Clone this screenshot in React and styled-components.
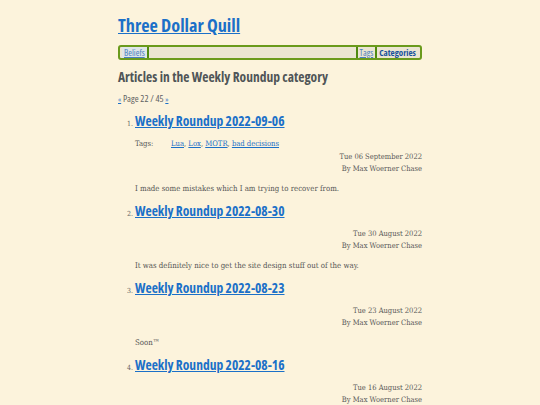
import React from 'react';
import styled, { createGlobalStyle } from 'styled-components';

const Global = createGlobalStyle`
    html, body {
        margin: 0;
        padding: 0;
        background: #fcf3dc;
    }
    body {
        font-family: "DejaVu Serif", "Liberation Serif", serif;
        font-stretch: condensed;
        color: #555;
    }
    a {
        color: #1b70c8;
    }
`;

const Page = () => (
    <>
        <Global />
        <Main>
            <Title><a href="#">Three Dollar Quill</a></Title>
            <Nav>
                <NavLink href="#" boxed>Beliefs</NavLink>
                <Bar />
                <Spacer />
                <Bar />
                <NavLink href="#">Tags</NavLink>
                <Bar />
                <NavLink href="#" current>Categories</NavLink>
            </Nav>
            <Heading>Articles in the Weekly Roundup category</Heading>
            <Pager>
                <a href="#">«</a> Page 22 / 45 <a href="#">»</a>
            </Pager>
            <List>
                {Data.map((post) => (
                    <Item key={post.title}>
                        <PostTitle><a href="#">{post.title}</a></PostTitle>
                        {post.tags && (
                            <Tags>
                                <TagLabel>Tags:</TagLabel>
                                <span>
                                    {post.tags.map((tag, i) => (
                                        <React.Fragment key={tag}>
                                            <a href="#">{tag}</a>
                                            {i < post.tags.length - 1 ? ', ' : ''}
                                        </React.Fragment>
                                    ))}
                                </span>
                            </Tags>
                        )}
                        <Meta tagged={!!post.tags}>
                            <div>{post.date}</div>
                            <div>By Max Woerner Chase</div>
                        </Meta>
                        {post.summary && <Summary>{post.summary}</Summary>}
                    </Item>
                ))}
            </List>
        </Main>
    </>
);

export default Page;

const sans = `"Open Sans", "Noto Sans", sans-serif`;

const Main = styled.main`
    width: 304px;
    margin: 0 auto;
    padding-top: 14px;
`;

const Title = styled.h1`
    margin: 0 0 9px;
    font-family: ${sans};
    font-stretch: 75%;
    font-size: 18.2px;
    line-height: 22px;
    font-weight: 700;
    a {
        color: #1b70c8;
    }
`;

const Nav = styled.nav`
    box-sizing: border-box;
    display: flex;
    align-items: center;
    height: 15px;
    padding: 0 2px;
    border: 2px solid #6a9a1c;
    border-radius: 3px;
    background: #ebe5d2;
    font-family: ${sans};
    font-stretch: 75%;
    font-size: 9px;
`;

const NavLink = styled.a`
    padding: 0 2px;
    line-height: 11px;
    color: ${(p) => (p.current ? '#19539c' : '#4a7fc0')};
    font-weight: ${(p) => (p.current ? 700 : 400)};
    text-decoration: ${(p) => (p.current ? 'none' : 'underline')};
    background: ${(p) => (p.boxed ? '#dfe6e8' : 'transparent')};
`;

const Bar = styled.span`
    width: 2px;
    height: 11px;
    background: #4f8a10;
`;

const Spacer = styled.span`
    flex: 1;
`;

const Heading = styled.h2`
    margin: 9px 0 9px;
    font-family: ${sans};
    font-stretch: 75%;
    font-size: 13.5px;
    line-height: 16px;
    font-weight: 700;
    color: #4f5557;
`;

const Pager = styled.p`
    margin: 0 0 9px;
    font-family: ${sans};
    font-stretch: 75%;
    font-size: 9.5px;
    line-height: 10px;
    color: #5f6263;
    a {
        font-size: 7px;
        line-height: 0;
    }
`;

const List = styled.ol`
    margin: 0;
    padding-left: 17px;
    font-size: 7px;
    li::marker {
        color: #666;
    }
`;

const Item = styled.li`
    margin-bottom: 8px;
`;

const PostTitle = styled.h3`
    margin: 0;
    font-family: ${sans};
    font-stretch: 75%;
    font-size: 13.5px;
    line-height: 16px;
    font-weight: 700;
`;

const Tags = styled.div`
    display: flex;
    margin-top: 9px;
    font-size: 7.6px;
    line-height: 12px;
`;

const TagLabel = styled.span`
    width: 36px;
`;

const Meta = styled.div`
    margin-top: ${(p) => (p.tagged ? '1px' : '9px')};
    text-align: right;
    font-size: 7.5px;
    line-height: 12px;
    color: #5a5a5a;
`;

const Summary = styled.p`
    margin: 8px 0 0;
    font-size: 7.8px;
    line-height: 12px;
`;

const Data = [
    {
        title: 'Weekly Roundup 2022-09-06',
        tags: ['Lua', 'Lox', 'MOTR', 'bad decisions'],
        date: 'Tue 06 September 2022',
        summary: 'I made some mistakes which I am trying to recover from.',
    },
    {
        title: 'Weekly Roundup 2022-08-30',
        date: 'Tue 30 August 2022',
        summary: 'It was definitely nice to get the site design stuff out of the way.',
    },
    {
        title: 'Weekly Roundup 2022-08-23',
        date: 'Tue 23 August 2022',
        summary: 'Soon™',
    },
    {
        title: 'Weekly Roundup 2022-08-16',
        date: 'Tue 16 August 2022',
    },
];
